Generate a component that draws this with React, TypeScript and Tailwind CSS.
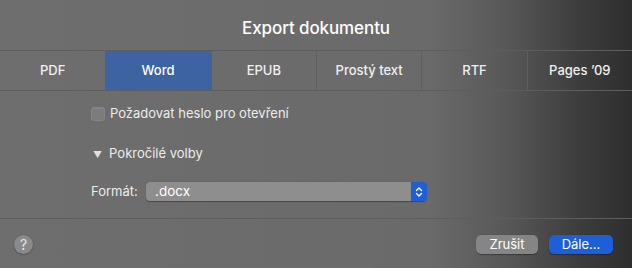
import React from "react";

const tabs = ["PDF", "Word", "EPUB", "Prostý text", "RTF", "Pages ’09"];

function Stepper() {
	return (
		<svg width="8" height="12" viewBox="0 0 8 12" fill="none" stroke="white" strokeWidth="1.4" strokeLinecap="round" strokeLinejoin="round">
			<path d="M1.5 4.5 L4 2 L6.5 4.5" />
			<path d="M1.5 7.5 L4 10 L6.5 7.5" />
		</svg>
	);
}

export default function App() {
	return (
		<div
			className="w-[632px] h-[268px] flex flex-col text-[#ececec] bg-[linear-gradient(to_right,#6e6e6e_0%,#6a6a6a_68%,#585858_80%,#3c3c3c_92%,#2e2e2e_100%)]"
			style={{ fontFamily: "Inter, 'Noto Sans', sans-serif" }}
		>
			<div className="h-[50px] flex items-center justify-center pt-[8px]">
				<h1 className="text-[17px] font-medium text-white tracking-[-0.1px]">Export dokumentu</h1>
			</div>

			<div className="grid grid-cols-6 h-[41px] border-y border-[#5d5d5d]">
				{tabs.map((t, i) => (
					<div
						key={t}
						className={
							"flex items-center justify-center text-[13px] font-medium " +
							(i === 1 ? "bg-[#3d63a3] text-white" : "text-[#f0f0f0] border-l border-[#5f5f5f] first:border-l-0")
						}
					>
						{t}
					</div>
				))}
			</div>

			<div className="flex flex-col pl-[91px]">
				<label className="mt-[16px] flex items-center gap-[5px] h-[14px] text-[13px]">
					<span className="w-[14px] h-[14px] rounded-[3px] bg-[#7c7c7c] border border-[#858585] shadow-[inset_0_1px_0_rgba(255,255,255,0.08)]" />
					<span>Požadovat heslo pro otevření</span>
				</label>

				<div className="mt-[25px] flex items-center gap-[7px] h-[16px] text-[13px]">
					<span className="text-[9px] leading-none text-[#e0e0e0] pl-[2px]">▼</span>
					<span>Pokročilé volby</span>
				</div>

				<div className="mt-[20px] flex items-center gap-[10px] h-[19px] text-[13px]">
					<span className="w-[45px]">Formát:</span>
					<div className="w-[281px] h-[19px] flex rounded-[4px] overflow-hidden bg-[#8e8e8e] shadow-[0_0.5px_1px_rgba(0,0,0,0.35)]">
						<span className="flex-1 pl-[9px] flex items-center text-white text-[13.5px]">.docx</span>
						<span className="w-[16px] bg-[#1e5fd8] flex items-center justify-center">
							<Stepper />
						</span>
					</div>
				</div>
			</div>

			<div className="mt-[17px] h-px bg-[#5d5d5d]" />

			<div className="mt-[16px] flex items-center justify-between pl-[14px] pr-[19px]">
				<div className="w-[19px] h-[19px] rounded-full bg-[#8a8a8a] shadow-[0_0.5px_1.5px_rgba(0,0,0,0.4)] flex items-center justify-center text-[14px] text-[#e6e6e6]">
					?
				</div>
				<div className="flex gap-[11px]">
					<button className="w-[62px] h-[19px] rounded-[5px] bg-[#858585] text-[13px] text-white shadow-[0_0.5px_1px_rgba(0,0,0,0.35)]">
						Zrušit
					</button>
					<button className="w-[64px] h-[19px] rounded-[5px] bg-[#1c5fd8] text-[13px] text-white shadow-[0_0.5px_1px_rgba(0,0,0,0.35)]">
						Dále…
					</button>
				</div>
			</div>
		</div>
	);
}
